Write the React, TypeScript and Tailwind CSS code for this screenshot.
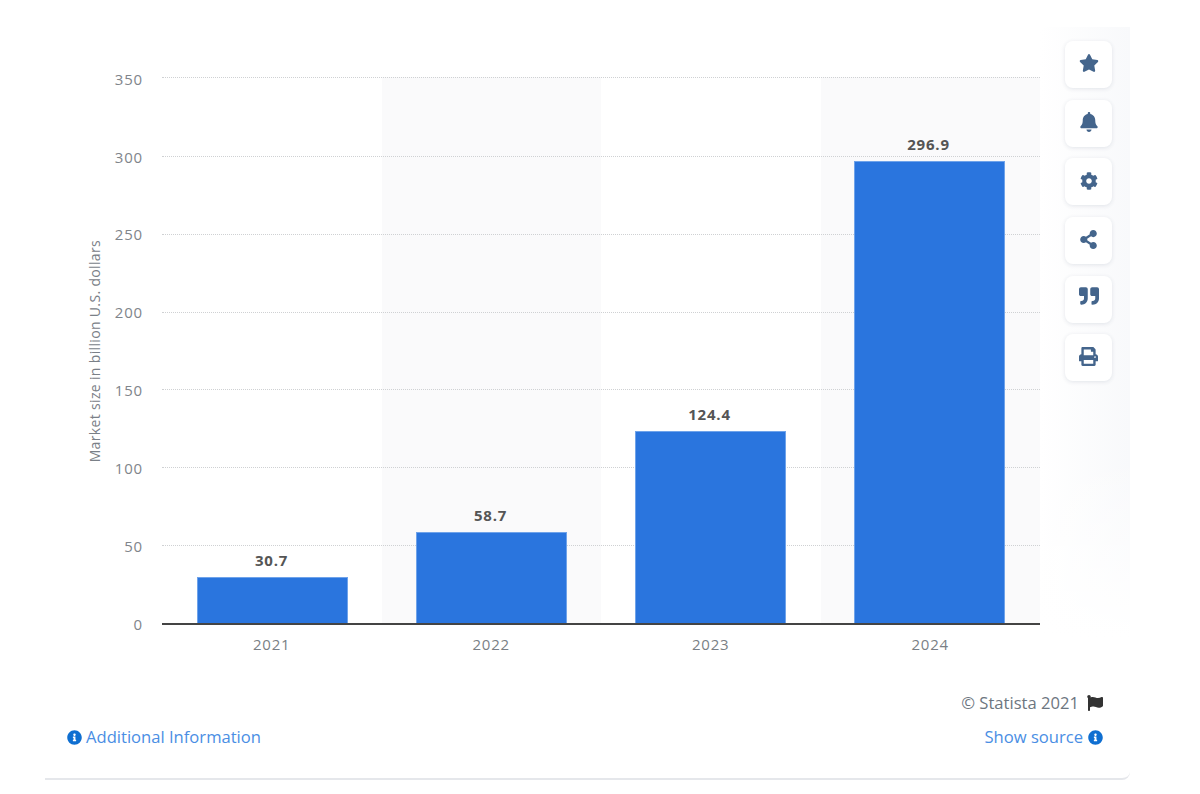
import { FaStar, FaBell, FaCog, FaShareAlt, FaQuoteRight, FaPrint, FaFlag, FaInfoCircle } from "react-icons/fa";

const ticks = ["350", "300", "250", "200", "150", "100", "50", "0"];
const bars = [
  { year: "2021", value: "30.7", h: "h-[46px]", band: false },
  { year: "2022", value: "58.7", h: "h-[91px]", band: true },
  { year: "2023", value: "124.4", h: "h-[192px]", band: false },
  { year: "2024", value: "296.9", h: "h-[462px]", band: true },
];
const tools = [
  { Icon: FaStar, size: 20, cls: "-translate-y-[2px]" },
  { Icon: FaBell, size: 20, cls: "-translate-y-[1px]" },
  { Icon: FaCog, size: 18, cls: "-translate-y-[1px]" },
  { Icon: FaShareAlt, size: 19, cls: "-translate-y-[1px]" },
  { Icon: FaQuoteRight, size: 20, cls: "-translate-y-[3px]" },
  { Icon: FaPrint, size: 19, cls: "-translate-y-[1px]" },
];

export default function App() {
  return (
    <div className="w-[1200px] h-[794px] bg-white overflow-hidden pl-[45px] pt-[27px] font-['Open_Sans',sans-serif] text-[#6d7680]">
      <div className="w-[1085px] h-[753px] flex flex-col border-b-2 border-[#e5e7eb] rounded-br-lg">
        <div className="flex h-[626px]">
          {/* y axis */}
          <div className="w-[117px] flex pt-[50px] pr-[19px]">
            <div className="w-[41px]" />
            <div className="w-[18px] h-[546px] flex items-center justify-center">
              <span className="[writing-mode:vertical-rl] rotate-180 text-[14px] tracking-[0.34px] leading-[18px] whitespace-nowrap text-[#7a8087] translate-y-[1px]">
                Market size in billion U.S. dollars
              </span>
            </div>
            <div className="flex-1 h-[545px] flex flex-col justify-between items-end">
              {ticks.map((t) => (
                <div key={t} className="h-0 flex items-center translate-y-[1.5px] text-[15px] tracking-[0.8px] text-[#7f858b]">
                  {t}
                </div>
              ))}
            </div>
          </div>
          <div className="w-[878px] pt-[50px]">
            <div className="relative h-[546px] border-b-2 border-[#444] box-content">
              <div className="absolute inset-0 flex">
                {bars.map((b) => (
                  <div key={b.year} className={`flex-1 ${b.band ? "bg-[#fafafb]" : ""}`} />
                ))}
              </div>
              <div className="absolute inset-x-0 top-[1px] bottom-0 flex flex-col justify-between">
                {ticks.slice(0, 7).map((t, i) => (
                  <div key={t} className={`border-t border-dotted border-[#cfd1d3] ${i === 0 ? "-translate-y-[1px]" : ""}`} />
                ))}
                <div />
              </div>
              <div className="absolute inset-y-0 left-[1px] right-[1px] flex">
                {bars.map((b) => (
                  <div key={b.year} className="flex-1 flex flex-col items-center justify-end">
                    <div className="text-[15px] font-bold tracking-[0.8px] leading-[20px] mb-[7px] -translate-x-[1px] text-[#555]">{b.value}</div>
                    <div className={`w-[151px] ${b.h} bg-[#2a75de] border border-[#6fa3ea] border-b-0`} />
                  </div>
                ))}
              </div>
            </div>
            <div className="flex mt-[9px]">
              {bars.map((b) => (
                <div key={b.year} className="flex-1 text-center text-[15px] tracking-[0.8px] leading-[20px] text-[#7a7f85]">
                  {b.year}
                </div>
              ))}
            </div>
          </div>
          {/* toolbar */}
          <div className="w-[90px] h-[610px] pl-[25px] pt-[14px] flex flex-col gap-[11.7px] bg-[linear-gradient(to_bottom,transparent_70%,white),linear-gradient(to_right,white,#f8f9fb)]">
            {tools.map(({ Icon, size, cls }, i) => (
              <div key={i} className="w-[47px] h-[47px] rounded-lg bg-white shadow-[0_1px_4px_rgba(40,60,90,0.12)] flex items-center justify-center text-[#44658c]">
                <Icon size={size} className={cls} />
              </div>
            ))}
          </div>
        </div>
        {/* footer */}
        <div className="flex flex-col pl-[22px] pr-[27px] pt-[38px]">
          <div className="flex justify-end items-center gap-[8px] text-[16.6px] leading-[24px] text-[#6d7680]">
            <span>© Statista 2021</span>
            <FaFlag size={16} className="text-[#333]" />
          </div>
          <div className="flex justify-between items-center mt-[10px] text-[16.6px] leading-[24px] text-[#4a8ee4]">
            <div className="flex items-center gap-[4px]">
              <FaInfoCircle size={15} className="text-[#0f6fd1]" />
              <span>Additional Information</span>
            </div>
            <div className="flex items-center gap-[5px]">
              <span>Show source</span>
              <FaInfoCircle size={15} className="text-[#0f6fd1]" />
            </div>
          </div>
        </div>
      </div>
    </div>
  );
}
